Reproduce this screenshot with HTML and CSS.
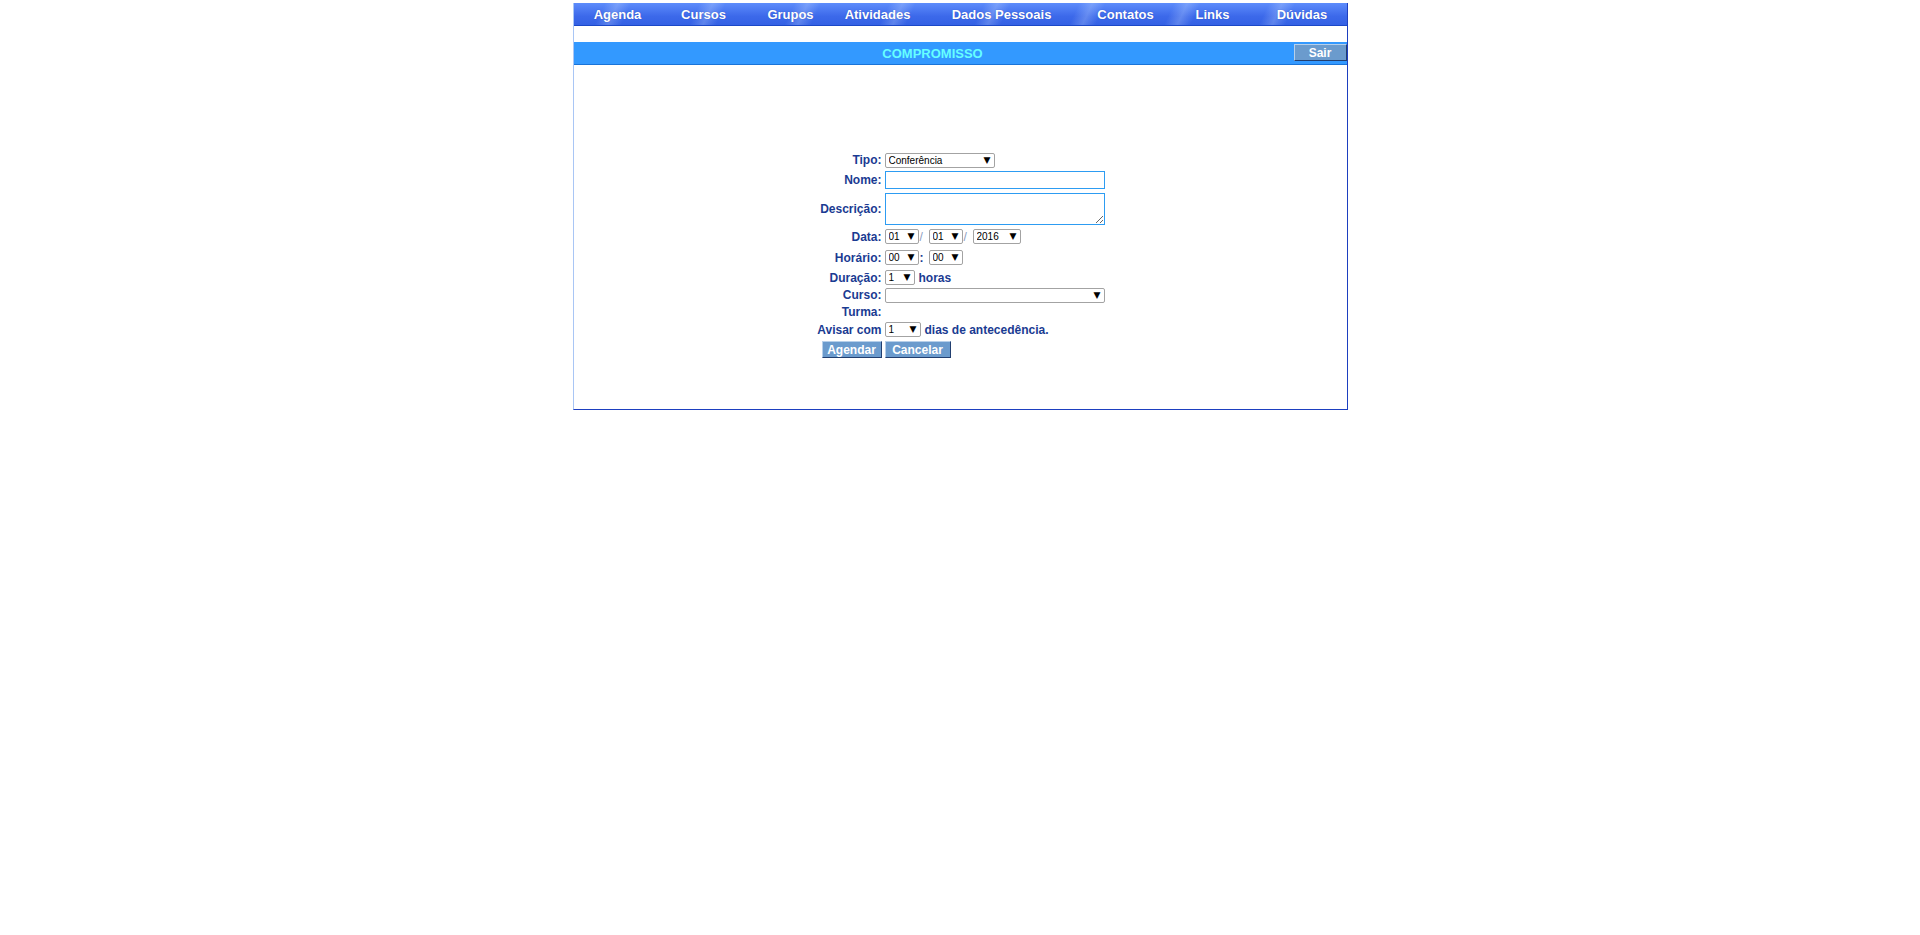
FILE: index.html
```html
<!DOCTYPE html>
<html lang="pt-BR">
<head>
<meta charset="utf-8">
<title>Compromisso</title>
<link rel="stylesheet" href="styles.css">
</head>
<body>
<div class="page">
  <nav class="topnav">
    <a class="nav-item">Agenda</a>
    <a class="nav-item">Cursos</a>
    <a class="nav-item">Grupos</a>
    <a class="nav-item">Atividades</a>
    <a class="nav-item">Dados Pessoais</a>
    <a class="nav-item">Contatos</a>
    <a class="nav-item">Links</a>
    <a class="nav-item">Dúvidas</a>
  </nav>
  <div class="spacer"></div>
  <div class="titlebar">
    <div class="title">COMPROMISSO</div>
    <div class="sair-cell"><button class="btn btn-sair" type="button">Sair</button></div>
  </div>
  <div class="content">
    <form class="form">
      <div class="row row-tipo">
        <label class="lbl">Tipo:</label>
        <div class="ctl"><span class="sel"><select class="w-tipo"><option>Conferência</option></select></span></div>
      </div>
      <div class="row row-nome">
        <label class="lbl">Nome:</label>
        <div class="ctl"><input class="txt" type="text"></div>
      </div>
      <div class="row row-desc">
        <label class="lbl">Descrição:</label>
        <div class="ctl"><textarea class="area"></textarea></div>
      </div>
      <div class="row row-data">
        <label class="lbl">Data:</label>
        <div class="ctl">
          <span class="sel"><select class="w-dd"><option>01</option></select></span>
          <span class="slash">/</span>
          <span class="sel"><select class="w-dd"><option>01</option></select></span>
          <span class="slash">/</span>
          <span class="sel"><select class="w-ano"><option>2016</option></select></span>
        </div>
      </div>
      <div class="row row-hora">
        <label class="lbl">Horário:</label>
        <div class="ctl">
          <span class="sel"><select class="w-dd"><option>00</option></select></span>
          <span class="colon">:</span>
          <span class="sel"><select class="w-dd"><option>00</option></select></span>
        </div>
      </div>
      <div class="row row-dur">
        <label class="lbl">Duração:</label>
        <div class="ctl">
          <span class="sel"><select class="w-dur"><option>1</option></select></span>
          <span class="after">horas</span>
        </div>
      </div>
      <div class="row row-curso">
        <label class="lbl">Curso:</label>
        <div class="ctl"><span class="sel"><select class="w-curso"><option></option></select></span></div>
      </div>
      <div class="row row-turma">
        <label class="lbl">Turma:</label>
        <div class="ctl"></div>
      </div>
      <div class="row row-aviso">
        <label class="lbl">Avisar com</label>
        <div class="ctl">
          <span class="sel"><select class="w-aviso"><option>1</option></select></span>
          <span class="after">dias de antecedência.</span>
        </div>
      </div>
      <div class="row row-btns">
        <div class="lbl"><button class="btn btn-agendar" type="button">Agendar</button></div>
        <div class="ctl"><button class="btn btn-cancelar" type="button">Cancelar</button></div>
      </div>
    </form>
  </div>
</div>
</body>
</html>
```
FILE: styles.css
```css
html, body {
  background: #ffffff;
}
body {
  margin: 3px 0 0 0;
  font-family: "Liberation Sans", Arial, sans-serif;
}
.page {
  width: 775px;
  margin: 0 auto;
  box-sizing: border-box;
  border-left: 1px solid #a9c6f5;
  border-right: 1px solid #1d3fc0;
  border-bottom: 1px solid #1d3fc0;
}
.topnav {
  display: grid;
  grid-template-columns: 88px 84px 90px 84px 164px 84px 90px 89px;
  height: 22px;
  border-bottom: 1px solid #1b48c8;
  background:
    repeating-linear-gradient(115deg,
      rgba(255,255,255,0) 0px,
      rgba(255,255,255,0) 28px,
      rgba(200,220,255,0.28) 40px,
      rgba(255,255,255,0) 52px,
      rgba(255,255,255,0) 86px),
    linear-gradient(#5d8cfb, #3c69ea 60%, #3461e4);
}
.nav-item {
  display: flex;
  align-items: center;
  justify-content: center;
  color: #ffffff;
  font-weight: bold;
  font-size: 13px;
  text-shadow: 0 0 1px rgba(20,40,140,0.5);
  white-space: nowrap;
  cursor: pointer;
}
.spacer {
  height: 16px;
  background: #ffffff;
}
.titlebar {
  display: flex;
  height: 22px;
  background: #3399ff;
  border-bottom: 1px solid #1a74d8;
}
.title {
  flex: 1;
  display: flex;
  align-items: center;
  justify-content: center;
  color: #66ffff;
  font-weight: bold;
  font-size: 13px;
}
.sair-cell {
  width: 55px;
  display: flex;
  justify-content: flex-end;
  align-items: flex-start;
  padding-top: 2px;
  box-sizing: border-box;
}
.btn {
  display: flex;
  align-items: center;
  justify-content: center;
  padding: 0;
  background: #6b9bcd;
  color: #ffffff;
  font-family: "Liberation Sans", Arial, sans-serif;
  font-weight: bold;
  font-size: 12px;
  border: 1px solid;
  border-color: #b7d0ea #223f70 #223f70 #b7d0ea;
  box-sizing: border-box;
}
.btn-sair {
  width: 53px;
  height: 17px;
}
.btn-agendar {
  width: 60px;
  height: 17px;
}
.btn-cancelar {
  width: 66px;
  height: 17px;
}
.content {
  padding: 86px 0 49px 0;
  display: flex;
  justify-content: center;
}
.form {
  display: flex;
  flex-direction: column;
  margin: 0;
}
.row {
  display: flex;
  align-items: center;
}
.lbl {
  width: 66px;
  margin-right: 3px;
  display: flex;
  justify-content: flex-end;
  text-align: right;
  white-space: nowrap;
  font-weight: bold;
  font-size: 12px;
  color: #1a3b92;
}
.ctl {
  width: 220px;
  display: flex;
  align-items: center;
}
.row-tipo { height: 18px; }
.row-nome { height: 22px; }
.row-desc { height: 35px; }
.row-data { height: 21px; }
.row-hora { height: 21px; }
.row-dur { height: 19px; }
.row-curso { height: 16px; }
.row-turma { height: 17px; }
.row-aviso { height: 19px; }
.row-btns { height: 21px; }

.sel {
  position: relative;
  display: inline-block;
  height: 15px;
}
.sel select {
  -webkit-appearance: none;
  appearance: none;
  height: 15px;
  box-sizing: border-box;
  border: 1px solid #a3a3a3;
  border-radius: 2px;
  background: #ffffff;
  color: #000000;
  font-family: "Liberation Sans", Arial, sans-serif;
  font-size: 10px;
  padding: 0 12px 0 3px;
  margin: 0;
  display: block;
}
.sel::after {
  content: "\25BC";
  position: absolute;
  right: 4px;
  top: 2px;
  font-family: "DejaVu Sans", sans-serif;
  font-size: 9px;
  line-height: 11px;
  color: #000000;
  pointer-events: none;
}
.w-tipo { width: 110px; }
.w-dd { width: 34px; }
.w-ano { width: 48px; }
.w-dur { width: 30px; }
.w-curso { width: 220px; }
.w-aviso { width: 36px; }

.slash {
  width: 10px;
  padding-left: 1px;
  box-sizing: border-box;
  font-size: 12px;
  color: #8d9cc0;
}
.colon {
  width: 10px;
  padding-left: 1px;
  box-sizing: border-box;
  font-size: 12px;
  font-weight: bold;
  color: #1a3b92;
}
.after {
  margin-left: 4px;
  font-size: 12px;
  font-weight: bold;
  color: #1a3b92;
  white-space: nowrap;
}
.txt {
  width: 220px;
  height: 18px;
  box-sizing: border-box;
  border: 1px solid #2d9cf2;
  margin: 0;
  padding: 0 2px;
  font-family: "Liberation Sans", Arial, sans-serif;
  font-size: 12px;
}
.area {
  width: 220px;
  height: 32px;
  box-sizing: border-box;
  border: 1px solid #2d9cf2;
  margin: 0;
  padding: 1px 2px;
  font-family: "Liberation Sans", Arial, sans-serif;
  font-size: 12px;
}
```
